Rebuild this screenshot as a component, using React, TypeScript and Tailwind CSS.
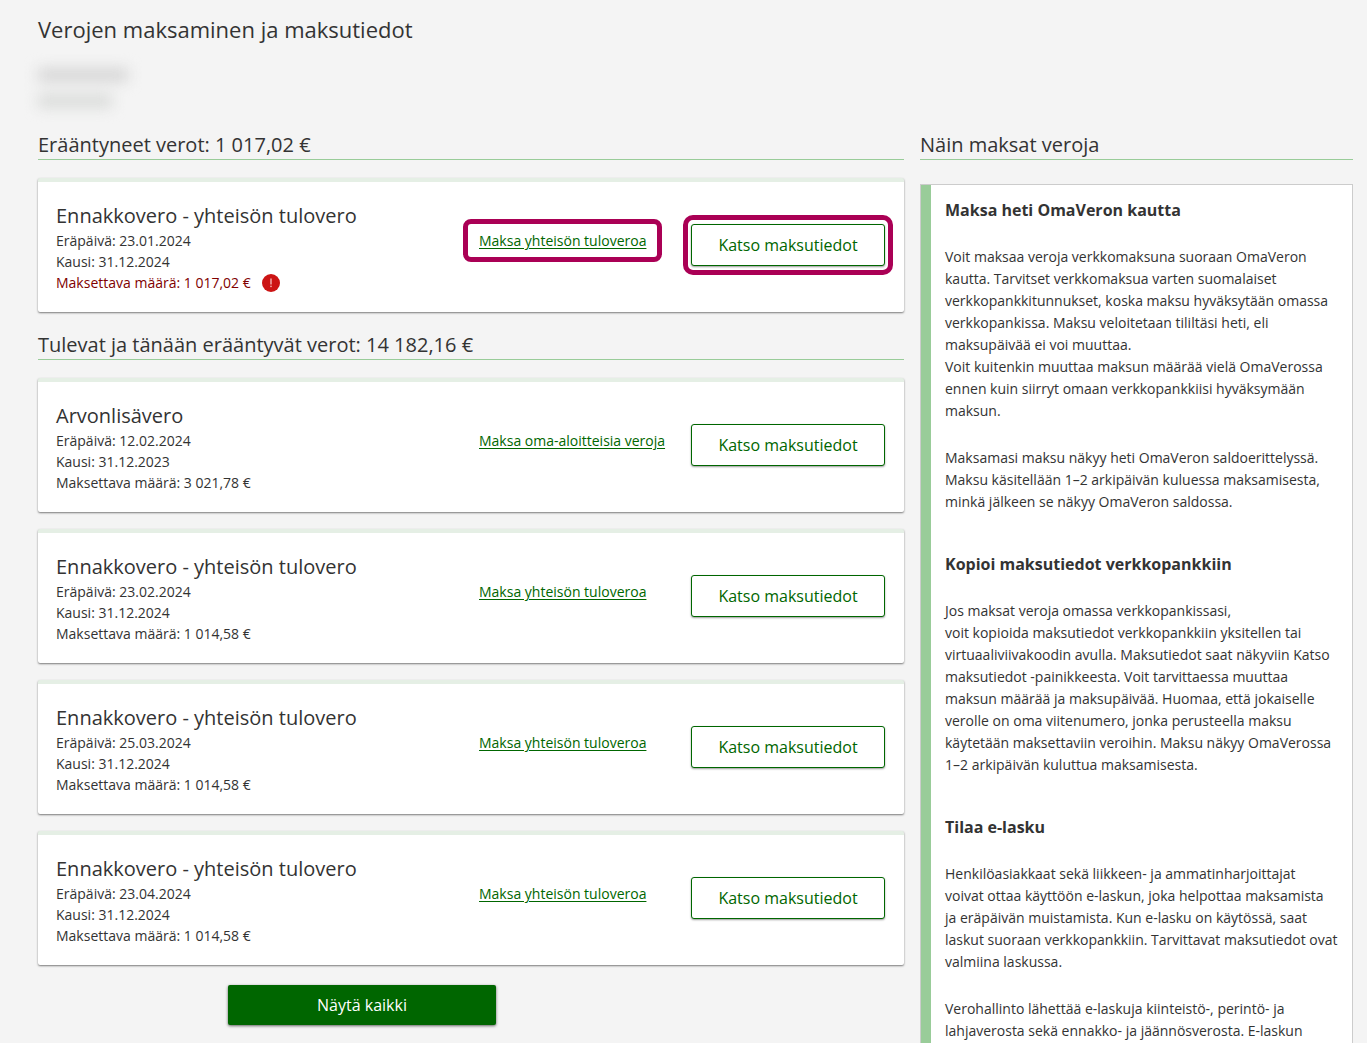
import { ReactNode } from "react";

type Tax = {
    id: string;
    title: string;
    due: string;
    period: string;
    amount: string;
    link: string;
    overdue?: boolean;
};

const overdueTaxes: Tax[] = [
    { id: "o1", title: "Ennakkovero - yhteisön tulovero", due: "23.01.2024", period: "31.12.2024", amount: "1 017,02 €", link: "Maksa yhteisön tuloveroa", overdue: true },
];

const upcomingTaxes: Tax[] = [
    { id: "u1", title: "Arvonlisävero", due: "12.02.2024", period: "31.12.2023", amount: "3 021,78 €", link: "Maksa oma-aloitteisia veroja" },
    { id: "u2", title: "Ennakkovero - yhteisön tulovero", due: "23.02.2024", period: "31.12.2024", amount: "1 014,58 €", link: "Maksa yhteisön tuloveroa" },
    { id: "u3", title: "Ennakkovero - yhteisön tulovero", due: "25.03.2024", period: "31.12.2024", amount: "1 014,58 €", link: "Maksa yhteisön tuloveroa" },
    { id: "u4", title: "Ennakkovero - yhteisön tulovero", due: "23.04.2024", period: "31.12.2024", amount: "1 014,58 €", link: "Maksa yhteisön tuloveroa" },
];

function SectionTitle({ children }: { children: ReactNode }) {
    return (
        <h2 className="h-[30px] border-b border-[#99cc99] text-xl leading-[29px] font-medium">
            {children}
        </h2>
    );
}

function AlertIcon() {
    return (
        <svg className="ml-[11px] size-[18px]" viewBox="0 0 18 18" role="img" aria-label="Erääntynyt">
            <circle cx="9" cy="9" r="9" fill="#cc1414" />
            <path d="M9 5v5" stroke="#f3b5b5" strokeWidth="1.4" strokeLinecap="round" />
            <circle cx="9" cy="12.4" r="0.8" fill="#f3b5b5" />
        </svg>
    );
}

function TaxCard({ tax }: { tax: Tax }) {
    return (
        <article className="grid grid-cols-[1fr_212px_194px] rounded-[2px] border-t-4 border-[#e5efe5] bg-white pt-5 pr-[19px] pb-[19px] pl-[18px] shadow-[0_1px_2px_rgba(0,0,0,0.5)]">
            <div>
                <h3 className="text-xl leading-7 font-medium">{tax.title}</h3>
                <p>Eräpäivä: {tax.due}</p>
                <p>Kausi: {tax.period}</p>
                <p className={tax.overdue ? "flex items-center text-[#800000]" : ""}>
                    Maksettava määrä: {tax.amount}
                    {tax.overdue && <AlertIcon />}
                </p>
            </div>
            <div className="pt-7">
                <a href="#" className="relative inline-block text-[#006600] underline underline-offset-2">
                    {tax.link}
                    {/* Highlight frame */}
                    {tax.overdue && <span className="absolute -inset-x-4 -inset-y-[11px] rounded-lg border-[5px] border-[#aa0055]" />}
                </a>
            </div>
            <div className="pt-[22px]">
                <button className="relative h-[42px] w-full rounded-[3px] border border-[#006600] bg-white text-base text-[#006600] shadow-[0_1px_2px_rgba(0,0,0,0.4)]">
                    Katso maksutiedot
                    {tax.overdue && <span className="absolute -inset-x-[9px] -inset-y-[10px] rounded-[10px] border-[5px] border-[#aa0055]" />}
                </button>
            </div>
        </article>
    );
}

function HelpTitle({ children }: { children: ReactNode }) {
    return <h3 className="mb-[25px] text-base leading-[22px] font-bold">{children}</h3>;
}

export default function App() {
    return (
        <main className="h-screen overflow-hidden bg-[#f4f4f4] pr-[14px] pl-[38px] font-['Open_Sans','Noto_Sans',sans-serif] text-sm leading-[21px] text-[#333333]">
            <h1 className="pt-[15px] text-[22px] leading-7 font-medium">Verojen maksaminen ja maksutiedot</h1>

            {/* Customer name and id, hidden */}
            <div className="mt-[25px] mb-[22px] flex flex-col gap-3 blur-[7px]" aria-hidden="true">
                <div className="h-[14px] w-[90px] bg-[#d6d6d6]" />
                <div className="h-[14px] w-[74px] bg-[#dadcda]" />
            </div>

            <div className="grid grid-cols-[2fr_1fr] gap-4">
                <section>
                    <SectionTitle>Erääntyneet verot: 1 017,02 €</SectionTitle>
                    <div className="mt-[18px] mb-[18px]">
                        {overdueTaxes.map((tax) => <TaxCard key={tax.id} tax={tax} />)}
                    </div>

                    <SectionTitle>Tulevat ja tänään erääntyvät verot: 14 182,16 €</SectionTitle>
                    <div className="mt-[18px] flex flex-col gap-[17px]">
                        {upcomingTaxes.map((tax) => <TaxCard key={tax.id} tax={tax} />)}
                    </div>

                    <button className="mt-5 ml-[190px] h-10 w-[268px] rounded-[2px] bg-[#006600] text-base text-white shadow-[0_1px_3px_rgba(0,0,0,0.6)]">
                        Näytä kaikki
                    </button>
                </section>

                <aside>
                    <SectionTitle>Näin maksat veroja</SectionTitle>
                    <div className="mt-6 border border-[#cccccc] bg-white">
                        <div className="border-l-[10px] border-[#99cc99] pt-[14px] pb-24 pl-[14px] leading-[22px] whitespace-pre-line">
                            <HelpTitle>Maksa heti OmaVeron kautta</HelpTitle>
                            <p>
                                {`Voit maksaa veroja verkkomaksuna suoraan OmaVeron
                                kautta. Tarvitset verkkomaksua varten suomalaiset
                                verkkopankkitunnukset, koska maksu hyväksytään omassa
                                verkkopankissa. Maksu veloitetaan tililtäsi heti, eli
                                maksupäivää ei voi muuttaa.`}
                            </p>
                            <p className="mb-[25px]">
                                {`Voit kuitenkin muuttaa maksun määrää vielä OmaVerossa
                                ennen kuin siirryt omaan verkkopankkiisi hyväksymään
                                maksun.`}
                            </p>
                            <p className="mb-10">
                                {`Maksamasi maksu näkyy heti OmaVeron saldoerittelyssä.
                                Maksu käsitellään 1–2 arkipäivän kuluessa maksamisesta,
                                minkä jälkeen se näkyy OmaVeron saldossa.`}
                            </p>

                            <HelpTitle>Kopioi maksutiedot verkkopankkiin</HelpTitle>
                            <p className="mb-10">
                                {`Jos maksat veroja omassa verkkopankissasi,
                                voit kopioida maksutiedot verkkopankkiin yksitellen tai
                                virtuaaliviivakoodin avulla. Maksutiedot saat näkyviin Katso
                                maksutiedot -painikkeesta. Voit tarvittaessa muuttaa
                                maksun määrää ja maksupäivää. Huomaa, että jokaiselle
                                verolle on oma viitenumero, jonka perusteella maksu
                                käytetään maksettaviin veroihin. Maksu näkyy OmaVerossa
                                1–2 arkipäivän kuluttua maksamisesta.`}
                            </p>

                            <HelpTitle>Tilaa e-lasku</HelpTitle>
                            <p className="mb-[25px]">
                                {`Henkilöasiakkaat sekä liikkeen- ja ammatinharjoittajat
                                voivat ottaa käyttöön e-laskun, joka helpottaa maksamista
                                ja eräpäivän muistamista. Kun e-lasku on käytössä, saat
                                laskut suoraan verkkopankkiin. Tarvittavat maksutiedot ovat
                                valmiina laskussa.`}
                            </p>
                            <p>
                                {`Verohallinto lähettää e-laskuja kiinteistö-, perintö- ja
                                lahjaverosta sekä ennakko- ja jäännösverosta. E-laskun`}
                            </p>
                        </div>
                    </div>
                </aside>
            </div>
        </main>
    );
}
